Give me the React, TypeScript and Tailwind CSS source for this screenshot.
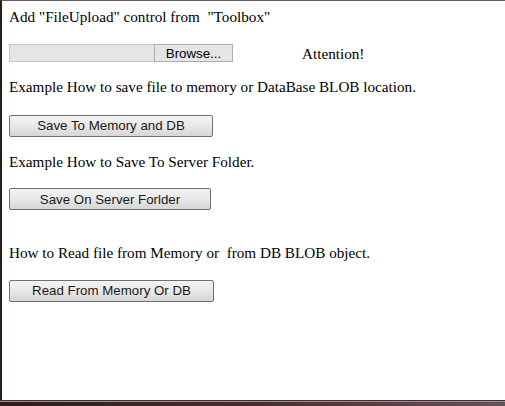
const serif = { fontFamily: '"Liberation Serif", "Times New Roman", serif' };

function WinButton({ label, width }: { label: string; width: string }) {
  return (
    <button
      type="button"
      className={`${width} h-[22px] border border-[#707070] rounded-[2px] bg-gradient-to-b from-[#f3f3f3] via-[#e8e8e8] to-[#d6d6d6] text-[13.3px] leading-none text-[#1a1a1a] font-['Liberation_Sans',Arial,sans-serif] flex items-center justify-center`}
    >
      {label}
    </button>
  );
}

export default function App() {
  return (
    <div className="w-[505px] h-[406px] flex flex-col bg-white overflow-hidden">
      <div
        className="flex-1 border-t border-t-[#5e5e5e] border-l-2 border-l-[#2a1c1c] pl-[7px] pt-[7px] text-[15.2px] leading-[18.4px] text-black"
        style={serif}
      >
        <p className="whitespace-pre">Add "FileUpload" control from  "Toolbox"</p>

        <div className="mt-[18px] h-[18px] flex items-center">
          <div className="w-[145px] h-[18px] bg-[#e5e5e5] border border-[#c6c6c6] border-r-0" />
          <div className="w-[79px] h-[18px] bg-[#e5e5e5] border border-[#adadad] flex items-center justify-center text-[13.3px] leading-none font-['Liberation_Sans',Arial,sans-serif]">
            Browse...
          </div>
          <span className="ml-[69px] mt-[2px]">Attention!</span>
        </div>

        <p className="mt-[16px]">Example How to save file to memory or DataBase BLOB location.</p>
        <div className="mt-[18px]">
          <WinButton label="Save To Memory and DB" width="w-[204px]" />
        </div>

        <p className="mt-[16px]">Example How to Save To Server Folder.</p>
        <div className="mt-[17px]">
          <WinButton label="Save On Server Forlder" width="w-[202px]" />
        </div>

        <p className="mt-[34px] whitespace-pre">How to Read file from Memory or  from DB BLOB object.</p>
        <div className="mt-[17px]">
          <WinButton label="Read From Memory Or DB" width="w-[205px]" />
        </div>
      </div>
      <div className="h-px bg-[#3a3030]" />
      <div className="h-px bg-[#9a9090]" />
      <div className="h-[4px] bg-gradient-to-r from-[#2e1a1a] via-[#4a2a30] to-[#6a5058]" />
    </div>
  );
}
